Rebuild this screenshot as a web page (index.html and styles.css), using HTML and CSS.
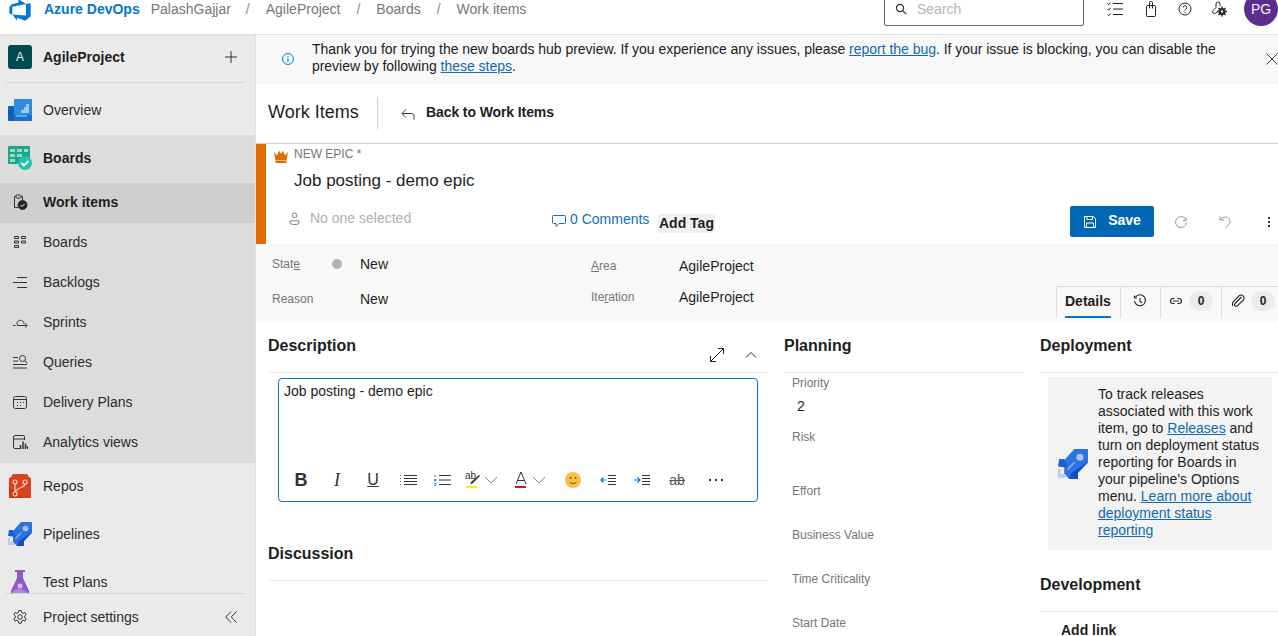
FILE: index.html
```html
<!DOCTYPE html>
<html>
<head>
  <title>Work items</title>
  <meta name="viewport" content="width=device-width, initial-scale=1">
  <link rel="stylesheet" href="styles.css">
</head>
<body>

<header class="topbar">
  <div class="topbar-inner">
    <svg class="logo" viewBox="0 0 18 18"><path fill="#0078d4" d="M17 4v9.74l-4 3.28-6.2-2.26V17l-3.51-4.59 10.23.8V4.44zm-3.41.49L7.85 1v2.29L2.58 4.84 1 6.87v4.61l2.26 1V6.57z"/></svg>
    <a class="brand">Azure DevOps</a>
    <span class="crumb crumb-org">PalashGajjar</span><span class="slash">/</span>
    <span class="crumb">AgileProject</span><span class="slash">/</span>
    <span class="crumb">Boards</span><span class="slash">/</span>
    <span class="crumb">Work items</span>
    <div class="search">
      <svg width="12" height="12" viewBox="0 0 12 12" fill="none" stroke="#333" stroke-width="1.2"><circle cx="5" cy="5" r="3.6"/><path d="M7.6 7.6l3.6 3.6"/></svg>
      <span>Search</span>
    </div>
    <div class="top-icons">
      <svg class="top-tasks" width="16" height="16" viewBox="0 0 16 16" fill="none" stroke="#222" stroke-width="1"><path d="M6 2.5h10M6 8h10M6 13.500h10M.5 2.500l1.200 1.200L3.500 1.500M.5 8l1.200 1.200L3.500 7M.5 13.500l1.200 1.200 1.800-2.200"/></svg>
      <svg width="16" height="16" viewBox="0 0 16 16" fill="none" stroke="#222" stroke-width="1"><rect x="3.500" y="4.500" width="9" height="11" rx="1"/><path d="M6.500 4.500V1.500a1 1 0 0 1 1-1h1a1 1 0 0 1 1 1v3M6.500 4.500v3M9.500 4.500v3"/></svg>
      <svg width="16" height="16" viewBox="0 0 16 16" fill="none" stroke="#222" stroke-width="1"><circle cx="8" cy="8" r="6"/><path d="M6.200 6.500a1.800 1.800 0 1 1 2.800 1.500c-.7.500-1 .8-1 1.500"/><path d="M8 11v1"/></svg>
      <svg width="16" height="16" viewBox="0 0 16 16" fill="none" stroke="#222" stroke-width="1"><path d="M5 6.500l-3 3a2 2 0 0 0 2.800 2.800L6 11M5 6.500V3a2 2 0 0 1 4 0v2"/><circle cx="11" cy="10.500" r="3.600" fill="#222" stroke="none"/><circle cx="11" cy="10.500" r="1.200" fill="#fff" stroke="none"/><path d="M11 5.500v1.500M11 14v1.500M6 10.500h1.500M14.500 10.500H16M7.500 7l1 1M13.500 13l1 1M14.500 7l-1 1M8.500 13l-1 1" stroke-width="1.500"/></svg>
    </div>
    <div class="avatar">PG</div>
  </div>
</header>

<div class="app">
  <nav class="sidebar">
    <div class="project">
      <span class="project-badge">A</span>
      <span class="project-name">AgileProject</span>
      <svg class="project-add" width="12" height="12" viewBox="0 0 12 12" stroke="#333" stroke-width="1"><path d="M6 0v12M0 6h12"/></svg>
    </div>
    <div class="nav-scroll">
      <a class="nav-item nav-overview">
        <svg class="nav-big" viewBox="0 0 24 22"><rect y="7" width="10" height="15" rx="1" fill="#0f5fb5"/><rect x="6" width="18" height="22" rx="1" fill="#2f8be0"/><path d="M6 22h17a1 1 0 0 0 1-1v-5H6z" fill="#1a6fd0"/><path d="M13 14v-3h3V8h2V5h3v9z" fill="#9cc9f2"/><path d="M8 16h11v2H8z" fill="#5da6e8"/></svg>
        <span>Overview</span>
      </a>
      <div class="nav-group">
        <a class="nav-item nav-head">
          <svg class="nav-big" viewBox="0 0 24 24"><rect width="22" height="18" rx="1" fill="#1fa58d"/><path d="M2 3h5v3H2zM9 3h5v3H9zM16 3h4v3h-4zM2 8h5v3H2zM2 13h5v3H2zM9 8h5v3H9z" fill="#8fe0cd"/><circle cx="17" cy="17" r="7" fill="#22c5a8"/><path d="M13.500 17l2.500 2.500 4.500-4.500" fill="none" stroke="#fff" stroke-width="1.800"/></svg>
          <span>Boards</span>
        </a>
        <a class="nav-sub nav-current">
          <svg class="nav-small" viewBox="0 0 16 16" fill="none" stroke="#333" stroke-width="1"><path d="M4 2.500H2.500v11H6M9 2.500h1.500V6"/><rect x="4" y="1" width="5" height="3" rx=".8"/><circle cx="10.500" cy="11" r="4.500" fill="#222"/><path d="M8.500 11l1.500 1.500 2.500-2.500" stroke="#fff"/></svg>
          <span>Work items</span>
        </a>
        <a class="nav-sub">
          <svg class="nav-small" viewBox="0 0 16 16" fill="none" stroke="#333" stroke-width="1"><path d="M2.500 2.500h4v2h-4zM2.500 7h4v2h-4zM2.500 11.500h4v2h-4zM9.500 2.500h4v2h-4zM9.500 7h4v2h-4z"/></svg>
          <span>Boards</span>
        </a>
        <a class="nav-sub">
          <svg class="nav-small" viewBox="0 0 16 16" fill="none" stroke="#333" stroke-width="1"><path d="M5 3.500h10M1 8.500h14M5 13.500h10"/></svg>
          <span>Backlogs</span>
        </a>
        <a class="nav-sub">
          <svg class="nav-small" viewBox="0 0 16 16" fill="none" stroke="#333" stroke-width="1"><path d="M1 11.500h2.500M14.500 11.500H5.500a3.500 3.500 0 1 1 6.500-1.500"/><path d="M13.500 9.500l1.500 2-1.500 2" /></svg>
          <span>Sprints</span>
        </a>
        <a class="nav-sub">
          <svg class="nav-small" viewBox="0 0 16 16" fill="none" stroke="#333" stroke-width="1"><path d="M1 3.500h5M1 7h5M1 10.500h14M1 14h14"/><circle cx="10.500" cy="4.500" r="3"/><path d="M12.700 6.700l2.800 2.300"/></svg>
          <span>Queries</span>
        </a>
        <a class="nav-sub">
          <svg class="nav-small" viewBox="0 0 16 16" fill="none" stroke="#333" stroke-width="1"><rect x="1.500" y="2.500" width="13" height="12" rx="2"/><path d="M1.500 5.500h13"/><path d="M5 8.500h1M8 8.500h1M11 8.500h1M5 11.500h1M8 11.500h1"/></svg>
          <span>Delivery Plans</span>
        </a>
        <a class="nav-sub">
          <svg class="nav-small" viewBox="0 0 16 16" fill="none" stroke="#333" stroke-width="1"><path d="M8 14.500H3a1.500 1.500 0 0 1-1.500-1.500V3A1.500 1.500 0 0 1 3 1.500h8A1.500 1.500 0 0 1 12.500 3v3M1.500 5h11"/><path d="M8.500 15V11M11 15V7.500M13.500 15V9.500M15.500 15v-3" stroke-width="1.500"/></svg>
          <span>Analytics views</span>
        </a>
      </div>
      <a class="nav-item">
        <svg class="nav-big" viewBox="0 0 24 24"><path d="M1 4l2-1 2-3h14l2 3 2 1v19a1 1 0 0 1-1 1H2a1 1 0 0 1-1-1z" fill="#d9421a"/><path d="M1 14l14 10H2a1 1 0 0 1-1-1z" fill="#c8390f"/><g fill="none" stroke="#fbd3c4" stroke-width="1.200"><circle cx="7" cy="8" r="2"/><circle cx="17" cy="8" r="2"/><circle cx="7" cy="20" r="2"/><path d="M7 10v8M17 10c0 4-8 3-9.500 8"/></g></svg>
        <span>Repos</span>
      </a>
      <a class="nav-item">
        <svg class="nav-big" viewBox="0 0 24 24"><path d="M5 9l8-9h11v11l-8 8v5H9l-4-4z" fill="#2d73df"/><path d="M24 10l-8 9v5H9l2-5z" fill="#0f4fc4"/><path d="M5 8H1L0 14l8 1z" fill="#1c5fd0"/><circle cx="17.500" cy="6.500" r="2.800" fill="#a3c6f7"/><path d="M7 16l6-6 1 1-6 6z" fill="#7fa8ee"/><path d="M0 16h2v4h4v3H0z" fill="#b6cff8"/></svg>
        <span>Pipelines</span>
      </a>
      <a class="nav-item">
        <svg class="nav-big" viewBox="0 0 24 24"><path d="M7 0h10v2h-2v6l6 13c.5 1.500 0 2-1 2H4c-1 0-1.500-.5-1-2L9 8V2H7z" fill="#8a5cc9"/><path d="M4 23c3-5 8-6 16 0z" fill="#b18ae0"/><circle cx="12" cy="16" r="2.500" fill="#d4bdf0"/></svg>
        <span>Test Plans</span>
      </a>
    </div>
    <div class="nav-foot">
      <svg class="nav-small" viewBox="0 0 16 16" fill="none" stroke="#333" stroke-width="1"><circle cx="8" cy="8" r="2.300"/><path d="M6.800 1.500h2.400l.4 2 1.500.8 1.900-.8 1.200 2-1.500 1.400v1.800l1.500 1.300-1.200 2.100-1.900-.8-1.500.9-.4 2H6.800l-.4-2-1.500-.9-1.900.8-1.200-2.100 1.500-1.300V6.900L1.800 5.500l1.200-2 1.900.8 1.500-.8z"/></svg>
      <span>Project settings</span>
      <svg class="collapse" width="12" height="12" viewBox="0 0 12 12" fill="none" stroke="#333" stroke-width="1"><path d="M6 .5L.8 6 6 11.500M11.500.5L6.300 6l5.200 5.500"/></svg>
    </div>
  </nav>

  <main class="content">
    <div class="banner">
      <svg class="banner-info" width="12" height="12" viewBox="0 0 12 12" fill="none" stroke="#0078d4" stroke-width="1"><circle cx="6" cy="6" r="5.500"/><path d="M6 5.200v3.800M6 3v1.200"/></svg>
      <p>Thank you for trying the new boards hub preview. If you experience any issues, please <a>report the bug</a>. If your issue is blocking, you can disable the preview by following <a>these steps</a>.</p>
      <svg class="banner-close" width="12" height="12" viewBox="0 0 12 12" stroke="#333" stroke-width="1"><path d="M.5.500l11 11M11.500.500l-11 11"/></svg>
    </div>

    <div class="page-title">
      <h1>Work Items</h1>
      <svg class="back-icon" width="14" height="12" viewBox="0 0 14 12" fill="none" stroke="#333" stroke-width="1"><path d="M13 11.500V8.500c0-2-1-3-3-3H1.500M5 1.500L1 5.500l4 4"/></svg>
      <span class="back-label">Back to Work Items</span>
    </div>

    <section class="form-head">
      <div class="form-head-body">
        <div class="type-row">
          <svg width="14" height="12" viewBox="0 0 14 12"><path d="M0 1l3 3.500L5 0h.5L7 3l1.500-3H9l2 4.500L14 1l-1.500 8.500h-11z" fill="#e06c00"/><rect x="1.500" y="10" width="11" height="2" fill="#e06c00"/></svg>
          <span>NEW EPIC *</span>
        </div>
        <div class="wi-title">Job posting - demo epic</div>
        <div class="action-row">
          <div class="assigned">
            <svg width="11" height="13" viewBox="0 0 12 14" fill="none" stroke="#777" stroke-width="1"><circle cx="6" cy="3.500" r="2.500"/><path d="M1 9.500h10v1a3 3 0 0 1-3 3H4a3 3 0 0 1-3-3z"/></svg>
            <span>No one selected</span>
          </div>
          <a class="comments">
            <svg width="14" height="14" viewBox="0 0 14 14" fill="none" stroke="#106ebe" stroke-width="1"><path d="M1.500 2.500h11a1 1 0 0 1 1 1v6a1 1 0 0 1-1 1H7l-3 3v-3H1.500a1 1 0 0 1-1-1v-6a1 1 0 0 1 1-1z"/></svg>
            <span>0 Comments</span>
          </a>
          <span class="add-tag">Add Tag</span>
          <button class="save">
            <svg width="14" height="14" viewBox="0 0 14 14" fill="none" stroke="#fff" stroke-width="1"><path d="M1.500 1.500h9l2 2v9h-11zM4 1.500v3h5.500v-3M3.500 12.500V8h7v4.500"/></svg>
            <span class="save-label">Save</span>
          </button>
          <span class="icon-btn"><svg width="14" height="14" viewBox="0 0 14 14" fill="none" stroke="#999" stroke-width="1"><path d="M12 2.500V5.500H9M12.500 7.500A5.500 5.500 0 1 1 11 3.300l1 1.500"/></svg></span>
          <span class="icon-btn"><svg width="14" height="14" viewBox="0 0 14 14" fill="none" stroke="#999" stroke-width="1"><path d="M2 1v4h4M2.500 5C4 2.500 6 2 8 2a4.500 4.500 0 0 1 4 5c-.3 2.500-3 4.500-5 6"/></svg></span>
          <span class="icon-btn dots"><i></i><i></i><i></i></span>
        </div>
      </div>
    </section>

    <section class="fields">
      <div class="field-col field-col-left">
        <div class="field-row">
          <span class="field-label"><span>Stat<u>e</u></span><i class="state-dot"></i></span>
          <span class="field-value">New</span>
        </div>
        <div class="field-row">
          <span class="field-label">Reason</span>
          <span class="field-value">New</span>
        </div>
      </div>
      <div class="field-col field-col-right">
        <div class="field-row field-row-short">
          <span class="field-label"><span><u>A</u>rea</span></span>
          <span class="field-value">AgileProject</span>
        </div>
        <div class="field-row field-row-short">
          <span class="field-label"><span>Ite<u>r</u>ation</span></span>
          <span class="field-value">AgileProject</span>
        </div>
      </div>
      <div class="tabs">
        <div class="tab tab-details"><b>Details</b></div>
        <div class="tab tab-history">
          <svg width="14" height="14" viewBox="0 0 14 14" fill="none" stroke="#222" stroke-width="1.100"><path d="M2.500 3A5.500 5.500 0 1 1 1.500 7M1.500 1.500v2.500h2.500M7 4v3.500l2.200 1.300"/></svg>
        </div>
        <div class="tab tab-links">
          <svg width="14" height="14" viewBox="0 0 14 14" fill="none" stroke="#222" stroke-width="1.100"><path d="M5.500 4.500H4a2.500 2.500 0 0 0 0 5h1.500M8.500 4.500H10a2.500 2.500 0 0 1 0 5H8.500M4 7h6"/></svg>
          <span class="count">0</span>
        </div>
        <div class="tab tab-files">
          <svg width="14" height="14" viewBox="0 0 14 14" fill="none" stroke="#222" stroke-width="1.100"><path d="M10.500 3L4 9.500a1.700 1.700 0 0 0 2.400 2.400l6-6a3 3 0 0 0-4.200-4.200L2 8a4 4 0 0 0 0 4"/></svg>
          <span class="count">0</span>
        </div>
      </div>
    </section>

    <section class="columns">
      <div class="col col-main">
        <div class="sec-head">
          <h2>Description</h2>
          <svg class="sec-expand" width="14" height="14" viewBox="0 0 14 14" fill="none" stroke="#222" stroke-width="1"><path d="M1 13L13 1M8 .500h5.500V6M.500 8v5.500H6"/></svg>
          <svg class="sec-collapse" width="12" height="8" viewBox="0 0 12 8" fill="none" stroke="#222" stroke-width="1"><path d="M1 6.500l5-5 5 5"/></svg>
        </div>
        <div class="editor">
          <div class="editor-text">Job posting - demo epic</div>
          <div class="toolbar">
            <span class="tb tb-bold">B</span>
            <span class="tb tb-italic">I</span>
            <span class="tb tb-under">U</span>
            <span class="tb"><svg width="17" height="12" viewBox="0 0 17 12" fill="none" stroke="#333"><path d="M4 1.500h13M4 4.500h13M4 7.500h13M4 10.500h13"/><path d="M0 1.500h1M0 4.500h1M0 7.500h1M0 10.500h1" stroke="#0078d4"/></svg></span>
            <span class="tb"><svg width="17" height="12" viewBox="0 0 17 12" fill="none" stroke="#333"><path d="M5 1.500h12M5 6h12M5 10.500h12"/><path d="M1 .500v2.500M0 5.500h2v1H0M0 9.500h2v2H0" stroke="#0078d4" stroke-width=".8"/></svg></span>
            <span class="tb tb-group">
              <svg width="18" height="18" viewBox="0 0 18 18"><text x="1" y="8" class="tb-ab">ab</text><path d="M6 12l9-8 1 1-8 8z" fill="#333"/><rect x="2" y="15" width="11" height="2" fill="#ffeb00"/></svg>
              <svg class="tb-chev" width="14" height="8" viewBox="0 0 14 8" fill="none" stroke="#888"><path d="M1 1l6 6 6-6"/></svg>
            </span>
            <span class="tb tb-group">
              <svg width="18" height="18" viewBox="0 0 18 18"><path d="M4 13L9 1l5 12M5.500 9.500h7" fill="none" stroke="#333"/><rect x="3" y="15" width="11" height="2" fill="#d3112a"/></svg>
              <svg class="tb-chev" width="14" height="8" viewBox="0 0 14 8" fill="none" stroke="#888"><path d="M1 1l6 6 6-6"/></svg>
            </span>
            <span class="tb"><svg width="16" height="16" viewBox="0 0 16 16"><circle cx="8" cy="8" r="8" fill="#f7c04a"/><circle cx="5.500" cy="6" r="1" fill="#7a5a10"/><circle cx="10.500" cy="6" r="1" fill="#7a5a10"/><path d="M4.500 10c1.500 2 5.500 2 7 0" fill="none" stroke="#7a5a10"/></svg></span>
            <span class="tb"><svg width="17" height="12" viewBox="0 0 17 12" fill="none" stroke="#333"><path d="M8 1.500h8M8 4.500h8M8 7.500h8M8 10.500h8"/><path d="M6 6H1M3.500 3.500L1 6l2.500 2.500" stroke="#0078d4" stroke-width="1.200"/></svg></span>
            <span class="tb"><svg width="17" height="12" viewBox="0 0 17 12" fill="none" stroke="#333"><path d="M8 1.500h8M8 4.500h8M8 7.500h8M8 10.500h8"/><path d="M0 6h6M3.500 3.500L6 6 3.500 8.500" stroke="#0078d4" stroke-width="1.200"/></svg></span>
            <span class="tb tb-strike">ab</span>
            <span class="tb tb-more"><i></i><i></i><i></i></span>
          </div>
        </div>
        <div class="sec-head sec-discussion">
          <h2>Discussion</h2>
        </div>
      </div>

      <div class="col col-planning">
        <div class="sec-head"><h2>Planning</h2></div>
        <div class="plan-list">
          <div class="plan-field"><label>Priority</label><div class="plan-value">2</div></div>
          <div class="plan-field"><label>Risk</label><div class="plan-value"></div></div>
          <div class="plan-field plan-field-short"><label>Effort</label><div class="plan-value"></div></div>
          <div class="plan-field plan-field-short"><label>Business Value</label><div class="plan-value"></div></div>
          <div class="plan-field plan-field-short"><label>Time Criticality</label><div class="plan-value"></div></div>
          <div class="plan-field plan-field-short"><label>Start Date</label><div class="plan-value"></div></div>
        </div>
      </div>

      <div class="col col-deploy">
        <div class="sec-head"><h2>Deployment</h2></div>
        <div class="deploy-box">
          <svg class="deploy-rocket" viewBox="0 0 24 24"><path d="M5 9l8-9h11v11l-8 8v5H9l-4-4z" fill="#2d73df"/><path d="M24 10l-8 9v5H9l2-5z" fill="#0f4fc4"/><path d="M5 8H1L0 14l8 1z" fill="#1c5fd0"/><circle cx="17.500" cy="6.500" r="2.800" fill="#a3c6f7"/><path d="M7 16l6-6 1 1-6 6z" fill="#7fa8ee"/><path d="M0 16h2v4h4v3H0z" fill="#b6cff8"/></svg>
          <p>To track releases associated with this work item, go to <a>Releases</a> and turn on deployment status reporting for Boards in your pipeline's Options menu. <a>Learn more about deployment status reporting</a></p>
        </div>
        <div class="sec-head sec-development"><h2>Development</h2></div>
        <div class="add-link">Add link</div>
      </div>
    </section>
  </main>
</div>

</body>
</html>
```

FILE: styles.css
```css
* {
  box-sizing: border-box;
}

html, body {
  margin: 0;
  height: 636px;
  overflow: hidden;
}

body {
  font-family: "Liberation Sans", Arial, sans-serif;
  font-size: 14px;
  color: #1e1e1e;
  background: #fff;
}

h1, h2, p {
  margin: 0;
  font-weight: normal;
}

a {
  color: inherit;
}

/* top bar, the page is scrolled a little so its top is cut off */
.topbar {
  height: 35px;
  overflow: hidden;
  border-bottom: 1px solid #e0e0e0;
}

.topbar-inner {
  height: 34px;
  margin-top: -8px;
  display: flex;
  align-items: center;
}

.logo {
  width: 24px;
  height: 24px;
  margin-left: 8px;
  margin-top: 2px;
}

.brand {
  margin-left: 12px;
  font-weight: bold;
  color: #0078d4;
}

.crumb {
  color: #767676;
}

.crumb-org {
  margin-left: 11px;
  margin-right: -1px;
}

.slash {
  color: #8a8a8a;
  margin: 0 16px;
}

.search {
  margin-left: auto;
  width: 200px;
  height: 34px;
  border: 1px solid #666;
  border-radius: 2px;
  padding-left: 10px;
  display: flex;
  align-items: center;
  gap: 10px;
  color: #b5b5b5;
}

.top-icons {
  display: flex;
  gap: 18px;
  margin-left: 23px;
}

.top-tasks {
  margin-right: 2px;
}

.avatar {
  width: 34px;
  height: 34px;
  border-radius: 50%;
  margin-left: 17px;
  background: #5c2d91;
  color: #f3ecf9;
  display: flex;
  align-items: center;
  justify-content: center;
}

.app {
  display: flex;
  height: 601px;
}

/* sidebar */
.sidebar {
  width: 256px;
  flex: none;
  background: #eaeaea;
  border-right: 1px solid #e2e2e2;
  display: flex;
  flex-direction: column;
  overflow: hidden;
}

.project {
  height: 48px;
  margin: 0 10px 0 6px;
  padding: 0 8px 3px 2px;
  border-bottom: 1px solid #d4d4d4;
  display: flex;
  align-items: center;
  flex: none;
}

.project-badge {
  width: 24px;
  height: 24px;
  border-radius: 3px;
  background: #004b50;
  color: #e6f1f1;
  font-size: 12px;
  display: flex;
  align-items: center;
  justify-content: center;
}

.project-name {
  margin-left: 11px;
  font-weight: bold;
}

.project-add {
  margin-left: auto;
}

.nav-scroll {
  flex: 1;
  overflow: hidden;
}

.nav-item {
  height: 48px;
  padding: 0 0 2px 8px;
  display: flex;
  align-items: center;
  gap: 11px;
  color: #2b2b2b;
}

.nav-overview {
  height: 52px;
  padding: 2px 0 0 8px;
}

.nav-big {
  width: 24px;
  height: 24px;
  flex: none;
}

.nav-group {
  background: #dcdcdc;
}

.nav-head {
  font-weight: bold;
  color: #1e1e1e;
}

.nav-sub {
  height: 40px;
  padding: 0 0 2px 12px;
  display: flex;
  align-items: center;
  gap: 15px;
  color: #2b2b2b;
}

.nav-small {
  width: 16px;
  height: 16px;
  flex: none;
}

.nav-current {
  background: #cfcfcf;
  font-weight: bold;
  color: #1e1e1e;
}

.nav-foot {
  height: 43px;
  flex: none;
  margin: 0 10px 0 6px;
  padding: 4px 0 0 6px;
  border-top: 1px solid #d4d4d4;
  display: flex;
  align-items: center;
  gap: 15px;
  color: #2b2b2b;
}

.collapse {
  margin-left: auto;
  margin-right: 8px;
}

/* main part */
.content {
  flex: 1;
  min-width: 0;
}

.banner {
  height: 49px;
  background: #f8f8f8;
  display: flex;
  align-items: flex-start;
  padding: 6px 0 0 26px;
  line-height: 17px;
}

.banner p {
  width: 930px;
  margin-left: 18px;
  color: #1b1b1b;
  letter-spacing: -0.025px;
}

.banner a, .deploy-box a {
  color: #106ab0;
  text-decoration: underline;
}

.banner-info {
  margin-top: 12px;
}

.banner-close {
  margin: 12px 0 0 29px;
}

.page-title {
  height: 60px;
  padding: 0 0 1px 12px;
  border-bottom: 1px solid #d0d0d0;
  display: flex;
  align-items: center;
}

.page-title h1 {
  font-size: 18px;
  width: 110px;
  height: 32px;
  line-height: 30px;
  border-right: 1px solid #d0d0d0;
}

.back-icon {
  margin-left: 23px;
  margin-top: 2px;
}

.back-label {
  margin-left: 11px;
  margin-top: -2px;
  font-weight: bold;
  letter-spacing: -0.1px;
}

.form-head {
  height: 100px;
  border-left: 10px solid #e06c00;
}

.form-head-body {
  padding-top: 3px;
}

.type-row {
  height: 15px;
  padding-left: 8px;
  display: flex;
  align-items: center;
  gap: 6px;
  font-size: 12px;
  line-height: 15px;
  color: #757575;
}

.type-row svg {
  margin-top: 4px;
}

.wi-title {
  margin: 7px 0 0 28px;
  font-size: 17px;
  line-height: 24px;
}

.action-row {
  margin-top: 13px;
  height: 31px;
  display: flex;
  align-items: flex-start;
}

.assigned {
  width: 263px;
  margin-left: 23px;
  margin-top: 4px;
  display: flex;
  align-items: center;
  gap: 10px;
  color: #b0b0b0;
  line-height: 17px;
}

.comments {
  width: 106px;
  margin-top: 5px;
  display: flex;
  align-items: center;
  gap: 4px;
  color: #106ebe;
  line-height: 17px;
}

.add-tag {
  margin-top: 8px;
  height: 19px;
  padding: 0 1px;
  line-height: 19px;
  border-radius: 2px;
  background: #f0f0f0;
  font-weight: bold;
}

.save {
  margin-left: auto;
  margin-right: 5px;
  width: 84px;
  height: 31px;
  border: none;
  border-radius: 2px;
  background: #0067b5;
  color: #fff;
  font: bold 14px "Liberation Sans", Arial, sans-serif;
  display: flex;
  align-items: center;
  justify-content: center;
  gap: 11px;
}

.save-label {
  margin-top: -3px;
}

.icon-btn {
  width: 44px;
  height: 31px;
  display: flex;
  align-items: center;
  justify-content: center;
}

.dots {
  width: 31px;
  padding-left: 13px;
  flex-direction: column;
  gap: 2px;
}

.dots i {
  width: 2px;
  height: 2px;
  background: #333;
}

.fields {
  height: 78px;
  background: #f8f8f8;
  padding-left: 16px;
  display: flex;
}

.field-col-left {
  width: 319px;
  padding-top: 2px;
}

.field-col-right {
  padding-top: 6px;
}

.field-row {
  height: 35px;
  display: flex;
  align-items: center;
}

.field-row-short {
  height: 31px;
}

.field-label {
  width: 88px;
  display: flex;
  align-items: center;
  font-size: 12px;
  color: #757575;
}

.state-dot {
  width: 10px;
  height: 10px;
  margin-left: 32px;
  border-radius: 50%;
  background: #b2b2b2;
}

.tabs {
  margin-left: auto;
  margin-top: 42px;
  height: 32px;
  width: 222px;
  display: flex;
  border-top: 1px solid #dcdcdc;
  border-left: 1px solid #dcdcdc;
}

.tab {
  padding-bottom: 3px;
  border-right: 1px solid #dcdcdc;
  display: flex;
  align-items: center;
}

.tab-details {
  width: 64px;
  padding-left: 8px;
  position: relative;
}

.tab-details::after {
  content: "";
  position: absolute;
  left: 8px;
  bottom: 0;
  width: 46px;
  height: 2px;
  background: #0078d4;
}

.tab-history {
  width: 40px;
  padding-left: 12px;
}

.tab-links {
  width: 61px;
  padding-left: 8px;
  gap: 6px;
}

.tab-files {
  width: 56px;
  padding-left: 9px;
  gap: 6px;
  border-right: none;
}

.count {
  width: 24px;
  height: 20px;
  border-radius: 10px;
  background: #ececec;
  font-size: 12px;
  font-weight: bold;
  text-align: center;
  line-height: 20px;
}

.columns {
  padding-left: 12px;
  display: flex;
  gap: 16px;
}

.col-main {
  width: 500px;
}

.col-planning {
  width: 240px;
}

.col-deploy {
  width: 238px;
}

.sec-head {
  height: 51px;
  padding-top: 13px;
  border-bottom: 1px solid #eaeaea;
  display: flex;
  align-items: flex-start;
}

.sec-head h2 {
  font-size: 16px;
  line-height: 22px;
  font-weight: bold;
}

.sec-expand {
  margin: 13px 0 0 auto;
}

.sec-collapse {
  margin: 16px 11px 0 21px;
}

.sec-discussion {
  margin-top: 28px;
}

.editor {
  margin: 5px 10px 0;
  height: 124px;
  border: 1px solid #0078d4;
  border-radius: 4px;
  display: flex;
  flex-direction: column;
  justify-content: space-between;
}

.editor-text {
  padding: 4px 0 0 5px;
  line-height: 17px;
}

.toolbar {
  height: 30px;
  margin-bottom: 6px;
  padding-left: 4px;
  display: grid;
  grid-template-columns: 36px 36px 36px 34px 34px 44px 52px 36px 34px 34px 36px 42px;
  align-items: center;
  justify-items: center;
  color: #333;
}

.tb {
  display: flex;
  align-items: center;
  justify-content: center;
}

.tb-group {
  gap: 2px;
}

.tb-ab {
  font-size: 10px;
  fill: #333;
}

.tb-bold {
  font-size: 18px;
  font-weight: bold;
}

.tb-italic {
  font: italic 18px "Liberation Serif", serif;
}

.tb-under {
  font-size: 16px;
  text-decoration: underline;
}

.tb-strike {
  font-size: 14px;
  color: #555;
  text-decoration: line-through;
}

.tb-more {
  gap: 4px;
}

.tb-more i {
  width: 2px;
  height: 2px;
  background: #333;
}

.plan-list {
  padding-top: 2px;
}

.plan-field {
  height: 54px;
  padding-left: 8px;
}

.plan-field-short {
  height: 44px;
}

.plan-field label {
  display: block;
  font-size: 12px;
  line-height: 16px;
  color: #757575;
}

.plan-value {
  padding-left: 5px;
  line-height: 30px;
}

.deploy-box {
  margin: 4px 6px 0 8px;
  height: 173px;
  background: #f3f3f3;
  display: flex;
  align-items: flex-start;
  padding: 9px 0 0 10px;
  line-height: 17px;
}

.deploy-box p {
  width: 164px;
  margin-left: 10px;
}

.deploy-rocket {
  width: 30px;
  height: 30px;
  flex: none;
  margin-top: 63px;
}

.sec-development {
  margin-top: 11px;
}

.add-link {
  margin-top: 10px;
  padding-left: 21px;
  font-weight: bold;
  line-height: 17px;
}
```
